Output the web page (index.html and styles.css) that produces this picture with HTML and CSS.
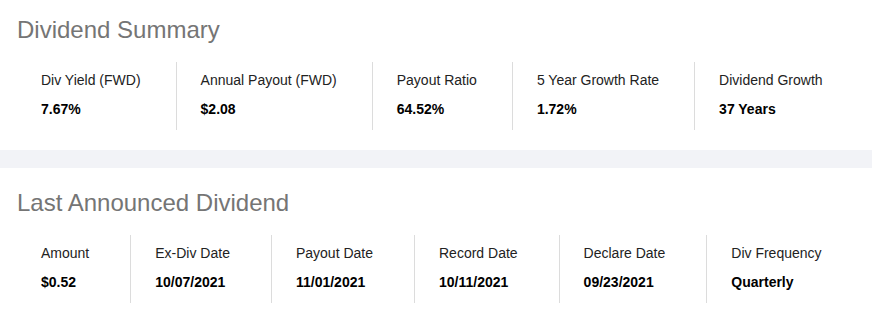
FILE: index.html
```html
<!DOCTYPE html>
<html>
<head>
<meta charset="utf-8">
<link rel="stylesheet" href="styles.css">
</head>
<body>
<section class="card card-first">
  <h2 class="title">Dividend Summary</h2>
  <div class="row row-summary">
    <div class="item"><div class="label">Div Yield (FWD)</div><div class="value">7.67%</div></div>
    <div class="item"><div class="label">Annual Payout (FWD)</div><div class="value">$2.08</div></div>
    <div class="item"><div class="label">Payout Ratio</div><div class="value">64.52%</div></div>
    <div class="item"><div class="label">5 Year Growth Rate</div><div class="value">1.72%</div></div>
    <div class="item"><div class="label">Dividend Growth</div><div class="value">37 Years</div></div>
  </div>
</section>
<div class="band"></div>
<section class="card card-second">
  <h2 class="title">Last Announced Dividend</h2>
  <div class="row row-last">
    <div class="item"><div class="label">Amount</div><div class="value">$0.52</div></div>
    <div class="item"><div class="label">Ex-Div Date</div><div class="value">10/07/2021</div></div>
    <div class="item"><div class="label">Payout Date</div><div class="value">11/01/2021</div></div>
    <div class="item"><div class="label">Record Date</div><div class="value">10/11/2021</div></div>
    <div class="item"><div class="label">Declare Date</div><div class="value">09/23/2021</div></div>
    <div class="item"><div class="label">Div Frequency</div><div class="value">Quarterly</div></div>
  </div>
</section>
</body>
</html>
```
FILE: styles.css
```css
html, body {
  margin: 0;
  padding: 0;
  background: #ffffff;
  font-family: "Liberation Sans", Arial, sans-serif;
  color: #222222;
}
.card {
  padding-left: 17px;
  padding-right: 17px;
}
.card-first {
  padding-top: 16px;
  padding-bottom: 20px;
}
.card-second {
  padding-top: 21px;
  padding-bottom: 10px;
}
.title {
  margin: 0 0 18px 0;
  font-size: 24px;
  line-height: 28px;
  font-weight: normal;
  color: #757575;
}
.row {
  display: flex;
  align-items: stretch;
}
.item {
  padding: 10px 35px 13px 24px;
  border-left: 1px solid #dcdcdc;
}
.item:first-child {
  border-left: none;
}
.row-last .item {
  padding-right: 41px;
}
.label {
  font-size: 14px;
  line-height: 16px;
  color: #222222;
  margin-bottom: 13px;
  white-space: nowrap;
}
.value {
  font-size: 14px;
  line-height: 16px;
  font-weight: bold;
  color: #000000;
  white-space: nowrap;
}
.band {
  height: 18px;
  background: #f2f3f7;
}
```
